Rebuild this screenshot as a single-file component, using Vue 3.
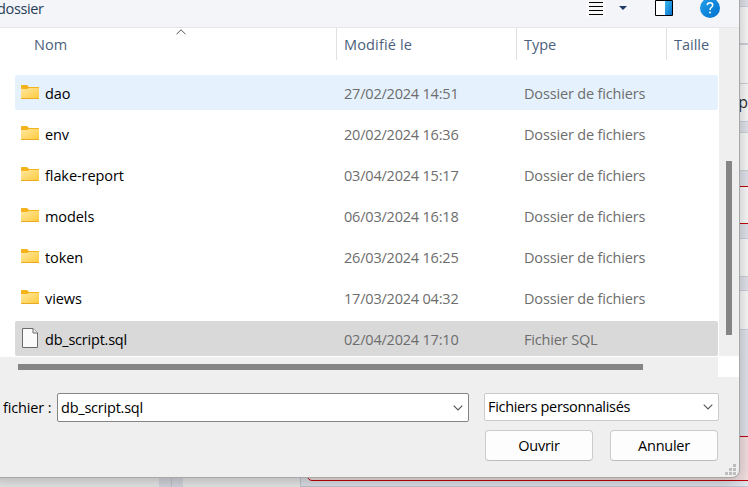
<script setup>
const files = [
  { name: 'dao', date: '27/02/2024 14:51', type: 'Dossier de fichiers', kind: 'folder', state: 'hovered' },
  { name: 'env', date: '20/02/2024 16:36', type: 'Dossier de fichiers', kind: 'folder' },
  { name: 'flake-report', date: '03/04/2024 15:17', type: 'Dossier de fichiers', kind: 'folder' },
  { name: 'models', date: '06/03/2024 16:18', type: 'Dossier de fichiers', kind: 'folder' },
  { name: 'token', date: '26/03/2024 16:25', type: 'Dossier de fichiers', kind: 'folder' },
  { name: 'views', date: '17/03/2024 04:32', type: 'Dossier de fichiers', kind: 'folder' },
  { name: 'db_script.sql', date: '02/04/2024 17:10', type: 'Fichier SQL', kind: 'file', state: 'selected' },
]
</script>

<template>
  <div class="screen">
    <div class="page">
      <div class="side"></div>
      <div class="gutter"><i></i><i></i></div>
      <div class="panel"></div>
      <div class="form">
        <div class="block first"></div>
        <div class="block second"></div>
        <div class="block label"><span>p</span></div>
        <div class="block field"></div>
        <div class="block invalid"></div>
        <div class="block field third"></div>
        <div class="block fourth"></div>
        <div class="alert"></div>
      </div>
    </div>

    <div class="dialog">
      <header class="toolbar">
        <span class="new-folder">dossier</span>
        <svg class="lines" width="20" height="18" viewBox="0 0 20 18">
          <path d="M0 0H20V18H0Z" fill="#f8f8f8" />
          <path d="M3 3.5H17M3 7.5H17M3 11.5H17M3 15.5H17" stroke="#000" />
        </svg>
        <svg class="drop" width="8" height="4" viewBox="0 0 8 4"><path d="M0 0H8L4 4Z" fill="#1f3a68" /></svg>
        <svg class="pane" width="18" height="16" viewBox="0 0 18 16">
          <defs><linearGradient id="pane-blue" x1="0" y1="0" x2="1" y2="1"><stop stop-color="#3bb9f0" /><stop offset="1" stop-color="#0873cd" /></linearGradient></defs>
          <path d="M.5 .5H17.5V15.5H.5Z" fill="#fff" stroke="#000" />
          <path d="M10 1H17V15H10Z" fill="url(#pane-blue)" />
        </svg>
        <svg class="help" width="20" height="20" viewBox="0 0 20 20">
          <defs><linearGradient id="help-blue" x1="0" y1="0" x2="1" y2="1"><stop stop-color="#23a1ea" /><stop offset="1" stop-color="#006fcd" /></linearGradient></defs>
          <circle cx="10" cy="10" r="10" fill="url(#help-blue)" />
          <path d="M7.3 7.2Q7.3 4.7 10 4.7Q12.7 4.7 12.7 7.1Q12.7 8.5 11.3 9.5Q10 10.4 10 12" fill="none" stroke="#fff" stroke-width="1.5" />
          <circle cx="10" cy="14.5" r="1" fill="#fff" />
        </svg>
      </header>

      <div class="browser">
        <div class="listing">
          <div class="columns">
            <span class="col-name">Nom
              <svg class="sort" width="10" height="6" viewBox="0 0 10 6"><path d="M.5 5.2L5 .8L9.5 5.2" fill="none" stroke="#555" /></svg>
            </span>
            <span class="col-date">Modifié le</span>
            <span class="col-type">Type</span>
            <span class="col-size">Taille</span>
          </div>
          <div class="rows">
            <div v-for="file in files" :key="file.name" class="row" :class="file.state">
              <span class="icon">
                <svg v-if="file.kind === 'folder'" width="18" height="14" viewBox="0 0 18 14">
                  <defs><linearGradient :id="'folder-' + file.name" x1="0" y1="0" x2="1" y2="1"><stop stop-color="#ffe8a0" /><stop offset="1" stop-color="#ffca3b" /></linearGradient></defs>
                  <path d="M0 .5Q0 0 .5 0H6L8 2H17.5Q18 2 18 2.5V6H0Z" fill="#f4b31b" />
                  <path d="M0 4H6.5L8 3H18V13.5Q18 14 17.5 14H.5Q0 14 0 13.5Z" :fill="'url(#folder-' + file.name + ')'" />
                  <path d="M.3 13.5H17.7" stroke="#e9a923" />
                </svg>
                <svg v-else class="doc" width="16" height="20" viewBox="0 0 16 20">
                  <path d="M.5 .5H11L15.5 5V19.5H.5Z" fill="#fafafa" stroke="#6b6b6b" />
                  <path d="M11 .5V5H15.5" fill="#eee" stroke="#6b6b6b" />
                </svg>
              </span>
              <span class="name" :class="file.kind">{{ file.name }}</span>
              <span class="date">{{ file.date }}</span>
              <span class="type">{{ file.type }}</span>
            </div>
          </div>
        </div>
        <div class="vscroll"><i></i></div>
      </div>
      <div class="hscroll"><div class="track"><i></i></div><b></b></div>

      <footer class="controls">
        <div class="line">
          <label>fichier :</label>
          <div class="filename"><span>db_script.sql</span>
            <svg class="chevron" width="10" height="6" viewBox="0 0 10 6"><path d="M.7 .7L5 5L9.3 .7" fill="none" stroke="#555" stroke-width="1.1" /></svg>
          </div>
          <div class="filter"><span>Fichiers personnalisés</span>
            <svg class="chevron" width="10" height="6" viewBox="0 0 10 6"><path d="M.7 .7L5 5L9.3 .7" fill="none" stroke="#555" stroke-width="1.1" /></svg>
          </div>
        </div>
        <div class="actions"><button class="open">Ouvrir</button><button class="cancel">Annuler</button></div>
      </footer>
      <svg class="grip" width="11" height="11" viewBox="0 0 11 11"><path d="M8 0h3v3H8zM4 4h3v3H4zM8 4h3v3H8zM0 8h3v3H0zM4 8h3v3H4zM8 8h3v3H8z" fill="#bdbdbd" /></svg>
    </div>
  </div>
</template>

<style>
body { margin: 0; overflow: hidden; }
</style>

<style scoped>
* { box-sizing: border-box; }
svg { display: block; flex: none; }
.screen { position: relative; width: 748px; height: 487px; overflow: hidden; font: 14.5px/20px "Open Sans", "Noto Sans", sans-serif; color: #000; }
.page { display: flex; height: 487px; background: #e2e5ec; }
.side { width: 159px; background: #ededed; }
.gutter { display: flex; gap: 1px; width: 24px; background: #c5c8d0; }
.gutter i { flex: 1; background: #d9dbe3; }
.panel { width: 118px; background: #ededed; border-right: 1px solid #c5c8d0; }
.form { flex: 1; padding-top: 6px; border-bottom: 1px solid #c5c8d2; }
.block { height: 39px; background: #fbfbfb; border-top: 1px solid #cfd2da; border-bottom: 1px solid #cfd2da; }
.first { height: 38px; }
.second { border-bottom: 0; }
.label { text-align: right; line-height: 36px; font-size: 16px; color: #333; }
.field { margin-top: 10px; }
.invalid { margin-top: 15px; height: 38px; border-color: #c50009; }
.third { margin-top: 14px; }
.fourth { margin-top: 13px; height: 40px; }
.alert { height: 45px; margin: 106px -8px 0 6px; border: 1px solid #c50009; border-radius: 5px; background: #f5e2e3; }
.dialog { position: absolute; left: -12px; top: -20px; width: 752px; height: 498px; background: #efefef; border: 1px solid #a8a8a8; border-radius: 8px; box-shadow: 0 4px 16px 1px rgba(0, 0, 0, .24); }
.toolbar { display: flex; align-items: flex-start; height: 47px; padding: 19px 0 0 8px; background: #f4f5f8; border-bottom: 1px solid #e5e5e5; border-radius: 7px 7px 0 0; color: #263d58; }
.new-folder { width: 589px; line-height: 18px; letter-spacing: -.35px; }
.lines { margin-top: -1px; }
.drop { margin: 6px 0 0 13px; }
.pane { margin-left: 28px; }
.help { margin: -2px 0 0 27px; }
.browser { display: flex; height: 329px; background: #fff; }
.listing { width: 730px; padding-left: 11px; }
.columns { display: flex; height: 32px; line-height: 33px; color: #4b607c; }
.columns > span { border-right: 1px solid #e1e1e1; letter-spacing: 0; }
.col-name { display: flex; width: 337px; padding-left: 34px; }
.sort { margin: 1px 0 0 109px; }
.col-date { width: 180px; padding-left: 7px; }
.columns > .col-date { letter-spacing: .15px; }
.col-type { width: 150px; padding-left: 7px; }
.columns > .col-size { padding-left: 7px; border: 0; }
.rows { display: flex; flex-direction: column; gap: 6px; padding: 15px 0 0 15px; }
.row { display: flex; width: 703px; height: 35px; padding-left: 6px; border-radius: 2px; line-height: 37px; }
.hovered { background: #e5f2fe; }
.selected { background: #d9d9d9; }
.icon { width: 24px; padding-top: 10px; }
.doc { margin: -3px 0 0 1px; }
.name { width: 299px; letter-spacing: -.08px; }
.file { letter-spacing: -.22px; }
.date { width: 180px; color: #6d6d6d; letter-spacing: -.2px; }
.type { color: #6d6d6d; letter-spacing: -.16px; }
.vscroll { width: 20px; height: 328px; padding: 133px 0 0 7px; background: #efefef; }
.vscroll i { display: block; width: 6px; height: 174px; background: #858585; }
.hscroll { display: flex; height: 20px; }
.track { width: 729px; padding: 7px 0 0 29px; }
.track i { display: block; width: 625px; height: 6px; background: #858585; }
.hscroll b { flex: 1; background: #fff; }
.controls { padding: 16px 20px 0 14px; }
.line { display: flex; align-items: flex-start; height: 29px; }
label { width: 54px; line-height: 29px; letter-spacing: -.15px; }
.filename, .filter { display: flex; flex: none; justify-content: space-between; align-items: center; background: #fff; border: 1px solid #858585; border-radius: 2px; }
.filename { width: 412px; height: 29px; padding: 0 5px 0 3px; letter-spacing: -.22px; }
.filter { width: 235px; height: 28px; margin-left: 15px; padding: 0 5px 0 3px; border-color: #cbcbcb; letter-spacing: -.32px; }
.actions { display: flex; justify-content: flex-end; gap: 17px; padding: 8px 1px 0 0; }
button { width: 108px; height: 31px; padding: 0; border: 1px solid #cbcbcb; border-bottom-color: #bcbcbc; border-radius: 4px; background: #fdfdfd; color: #000; font: inherit; letter-spacing: -.25px; }
.grip { position: absolute; right: 3px; bottom: 2px; }
</style>
